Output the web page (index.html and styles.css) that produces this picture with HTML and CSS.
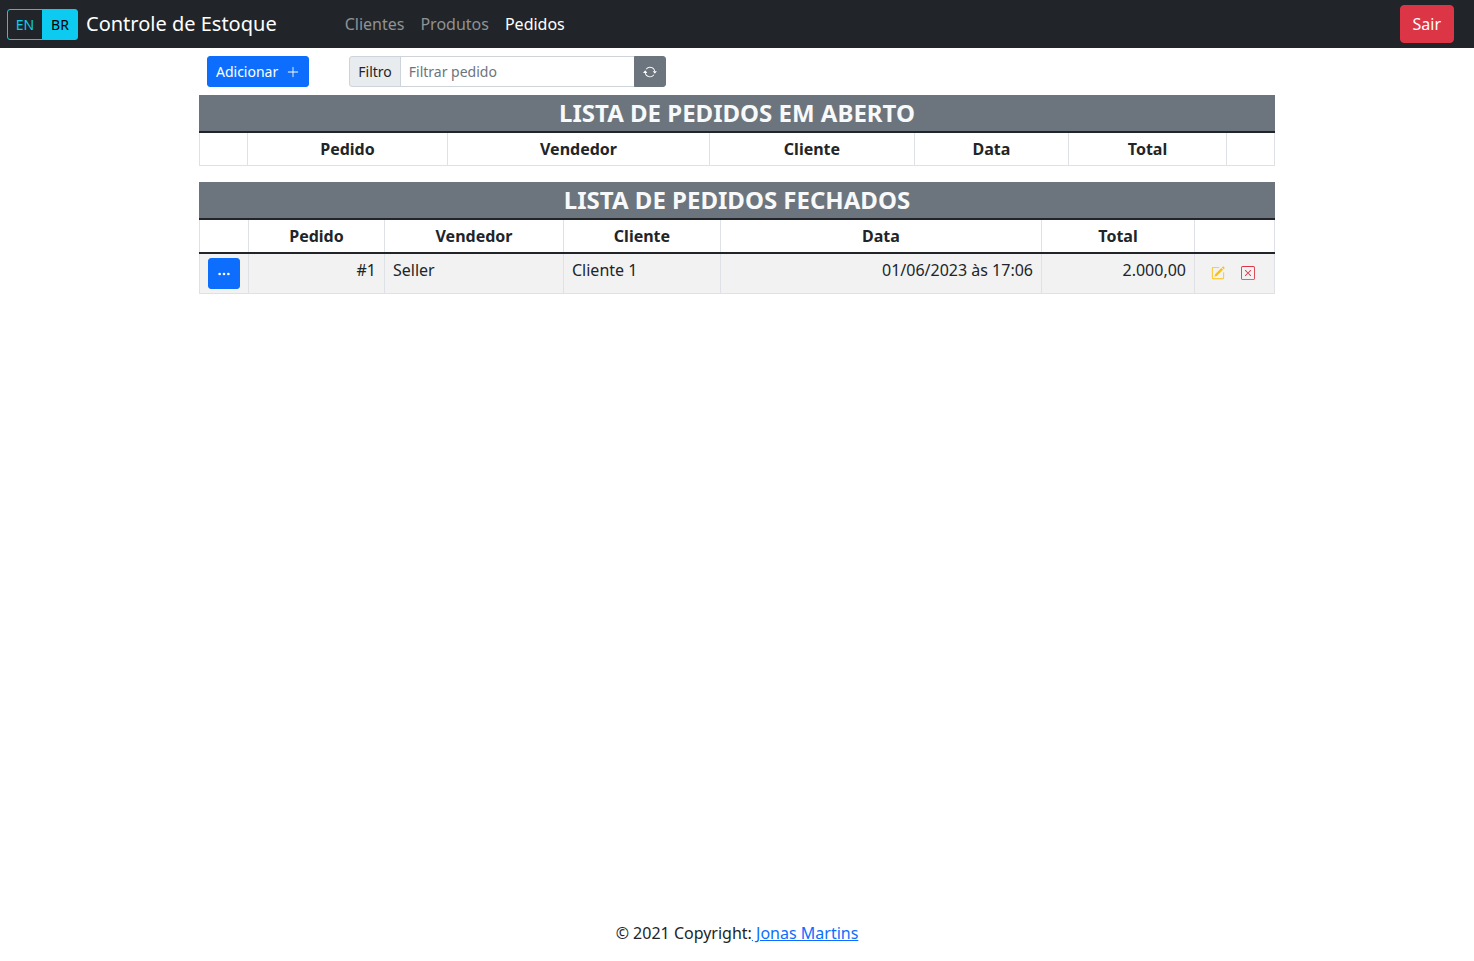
FILE: index.html
```html
<!DOCTYPE html>
<html lang="pt-BR">
<head>
  <meta charset="utf-8">
  <meta name="viewport" content="width=device-width, initial-scale=1">
  <title>Controle de Estoque</title>
  <link rel="stylesheet" href="styles.css">
</head>
<body>
  <header class="navbar">
    <div class="lang">
      <button type="button" class="lang-btn">EN</button>
      <button type="button" class="lang-btn active">BR</button>
    </div>
    <a class="brand" href="#">Controle de Estoque</a>
    <nav class="menu">
      <a href="#">Clientes</a>
      <a href="#">Produtos</a>
      <a href="#" class="current">Pedidos</a>
    </nav>
    <button type="button" class="btn-logout">Sair</button>
  </header>

  <main class="content">
    <div class="toolbar">
      <button type="button" class="btn btn-primary">Adicionar
        <svg class="icon" viewBox="0 0 16 16" aria-hidden="true"><path d="M8 2a.5.5 0 0 1 .5.5v5h5a.5.5 0 0 1 0 1h-5v5a.5.5 0 0 1-1 0v-5h-5a.5.5 0 0 1 0-1h5v-5A.5.5 0 0 1 8 2z"/></svg>
      </button>
      <div class="filter">
        <label class="filter-label" for="filter">Filtro</label>
        <input class="filter-input" id="filter" type="text" placeholder="Filtrar pedido">
        <button type="button" class="btn btn-refresh" aria-label="Atualizar">
          <svg class="icon" viewBox="0 0 16 16" aria-hidden="true"><path d="M11.534 7h3.932a.25.25 0 0 1 .192.41l-1.966 2.36a.25.25 0 0 1-.384 0l-1.966-2.36a.25.25 0 0 1 .192-.41zm-11 2h3.932a.25.25 0 0 0 .192-.41L2.692 6.23a.25.25 0 0 0-.384 0L.342 8.59A.25.25 0 0 0 .534 9z"/><path fill-rule="evenodd" d="M8 3c-1.552 0-2.94.707-3.857 1.818a.5.5 0 1 1-.771-.636A6.002 6.002 0 0 1 13.917 7H12.9A5.002 5.002 0 0 0 8 3zM3.1 9a5.002 5.002 0 0 0 8.757 2.182.5.5 0 1 1 .771.636A6.002 6.002 0 0 1 2.083 9H3.1z"/></svg>
        </button>
      </div>
    </div>

    <table class="orders orders-open">
      <caption>LISTA DE PEDIDOS EM ABERTO</caption>
      <colgroup><col class="c-menu"><col class="c-order"><col class="c-seller"><col class="c-client"><col class="c-date"><col class="c-total"><col class="c-actions"></colgroup>
      <thead>
        <tr><th></th><th>Pedido</th><th>Vendedor</th><th>Cliente</th><th>Data</th><th>Total</th><th></th></tr>
      </thead>
    </table>

    <table class="orders orders-closed">
      <caption>LISTA DE PEDIDOS FECHADOS</caption>
      <colgroup><col class="c-menu"><col class="c-order"><col class="c-seller"><col class="c-client"><col class="c-date"><col class="c-total"><col class="c-actions"></colgroup>
      <thead>
        <tr><th></th><th>Pedido</th><th>Vendedor</th><th>Cliente</th><th>Data</th><th>Total</th><th></th></tr>
      </thead>
      <tbody>
        <tr>
          <td><button type="button" class="btn btn-primary" aria-label="Detalhes"><svg class="icon" viewBox="0 0 16 16" aria-hidden="true"><path d="M3 9.5a1.5 1.5 0 1 1 0-3 1.5 1.5 0 0 1 0 3zm5 0a1.5 1.5 0 1 1 0-3 1.5 1.5 0 0 1 0 3zm5 0a1.5 1.5 0 1 1 0-3 1.5 1.5 0 0 1 0 3z"/></svg></button></td>
          <td class="num">#1</td>
          <td>Seller</td>
          <td>Cliente 1</td>
          <td class="num">01/06/2023 às 17:06</td>
          <td class="num">2.000,00</td>
          <td>
            <div class="actions">
              <button type="button" class="btn-icon edit" aria-label="Editar"><svg class="icon" viewBox="0 0 16 16" aria-hidden="true"><path d="M15.502 1.94a.5.5 0 0 1 0 .706L14.459 3.69l-2-2L13.502.646a.5.5 0 0 1 .707 0l1.293 1.293zm-1.75 2.456-2-2L4.939 9.21a.5.5 0 0 0-.121.196l-.805 2.414a.25.25 0 0 0 .316.316l2.414-.805a.5.5 0 0 0 .196-.12l6.813-6.814z"/><path fill-rule="evenodd" d="M1 13.5A1.5 1.5 0 0 0 2.500 15h11a1.500 1.500 0 0 0 1.500-1.500v-6a.5.5 0 0 0-1 0v6a.5.5 0 0 1-.5.5h-11a.5.5 0 0 1-.5-.5v-11a.5.5 0 0 1 .5-.5H9a.5.5 0 0 0 0-1H2.500A1.500 1.500 0 0 0 1 2.500v11z"/></svg></button>
              <button type="button" class="btn-icon remove" aria-label="Excluir"><svg class="icon" viewBox="0 0 16 16" aria-hidden="true"><path d="M14 1a1 1 0 0 1 1 1v12a1 1 0 0 1-1 1H2a1 1 0 0 1-1-1V2a1 1 0 0 1 1-1h12zM2 0a2 2 0 0 0-2 2v12a2 2 0 0 0 2 2h12a2 2 0 0 0 2-2V2a2 2 0 0 0-2-2H2z"/><path d="M4.646 4.646a.5.5 0 0 1 .708 0L8 7.293l2.646-2.647a.5.5 0 0 1 .708.708L8.707 8l2.647 2.646a.5.5 0 0 1-.708.708L8 8.707l-2.646 2.647a.5.5 0 0 1-.708-.708L7.293 8 4.646 5.354a.5.5 0 0 1 0-.708z"/></svg></button>
            </div>
          </td>
        </tr>
      </tbody>
    </table>
  </main>

  <footer class="footer">© 2021 Copyright:<a href="#"> Jonas Martins</a></footer>
</body>
</html>
```
FILE: styles.css
```css
*, *::before, *::after { box-sizing: border-box; }

body {
  margin: 0;
  min-height: 100vh;
  display: flex;
  flex-direction: column;
  font: 16px/24px "Noto Sans", "Liberation Sans", sans-serif;
  color: #212529;
  background: #fff;
}

button, input { font: inherit; margin: 0; }
button { cursor: pointer; }

.icon { display: block; width: 14px; height: 14px; fill: currentColor; }

.navbar {
  display: flex;
  align-items: center;
  min-height: 48px;
  padding: 5px 20px 5px 7px;
  background: #212529;
}

.lang { display: flex; }
.lang-btn {
  width: 36px;
  padding: 4px 0;
  border: 1px solid #0dcaf0;
  border-radius: 3px 0 0 3px;
  font-size: 14px;
  line-height: 21px;
  color: #0dcaf0;
  background: transparent;
}
.lang-btn.active {
  margin-left: -1px;
  border-radius: 0 3px 3px 0;
  color: #000;
  background: #0dcaf0;
}

.brand {
  margin: 0 60px 0 8px;
  font-size: 20px;
  line-height: 30px;
  color: #fff;
  text-decoration: none;
  white-space: nowrap;
}

.menu { display: flex; flex: 1; }
.menu a { padding: 0 8px; color: #909294; text-decoration: none; }
.menu .current { color: #fff; }

.btn-logout {
  padding: 6px 12px;
  border: 1px solid #dc3545;
  border-radius: 4px;
  color: #fff;
  background: #dc3545;
}

.content { width: 73%; margin: 0 auto; flex: 1; }

.toolbar { display: flex; gap: 40px; padding: 8px; }

.btn {
  display: flex;
  align-items: center;
  gap: 8px;
  min-height: 31px;
  padding: 4px 8px;
  border: 1px solid transparent;
  border-radius: 3px;
  font-size: 14px;
  line-height: 21px;
  color: #fff;
}
.btn-primary { background: #0d6efd; border-color: #0d6efd; }

.filter { display: flex; width: 317px; font-size: 14px; line-height: 21px; }
.filter-label {
  padding: 4px 8px;
  border: 1px solid #ced4da;
  border-radius: 3px 0 0 3px;
  background: #e9ecef;
}
.filter-input {
  flex: 1;
  min-width: 0;
  margin-left: -1px;
  padding: 4px 8px;
  border: 1px solid #ced4da;
  color: #212529;
}
.filter-input::placeholder { color: #6c757d; opacity: 1; }
.btn-refresh {
  margin-left: -1px;
  border-color: #6c757d;
  border-radius: 0 3px 3px 0;
  background: #6c757d;
}

.orders {
  width: 100%;
  margin-bottom: 16px;
  table-layout: fixed;
  border-collapse: collapse;
}
.orders caption {
  padding: 4px;
  font-size: 24px;
  font-weight: 700;
  line-height: 28px;
  color: #f8f9fa;
  background: #6c757d;
}
.orders th, .orders td { padding: 4px 8px; border: 1px solid #dee2e6; vertical-align: top; }
.orders th { height: 33px; text-align: center; }
.orders thead th { border-top: 2px solid #212529; }
.orders tbody { border-top: 2px solid #212529; }
.orders tbody td { background: #f2f2f2; }
.orders tbody tr:first-child td { border-top: 2px solid #212529; }
.orders .num { text-align: right; }

.orders-open .c-menu, .orders-open .c-actions { width: 48px; }
.orders-open .c-order { width: 200px; }
.orders-open .c-seller { width: 262px; }
.orders-open .c-client { width: 205px; }
.orders-open .c-date { width: 154px; }
.orders-open .c-total { width: 158px; }

.orders-closed .c-menu { width: 49px; }
.orders-closed .c-order { width: 136px; }
.orders-closed .c-seller { width: 179px; }
.orders-closed .c-client { width: 157px; }
.orders-closed .c-date { width: 321px; }
.orders-closed .c-total { width: 153px; }
.orders-closed .c-actions { width: 80px; }

.actions { display: flex; }
.btn-icon { padding: 8px; border: 0; background: transparent; }
.edit { color: #ffc107; }
.remove { color: #dc3545; }

.footer { padding: 16px; text-align: center; }
.footer a { color: #0d6efd; }
```
